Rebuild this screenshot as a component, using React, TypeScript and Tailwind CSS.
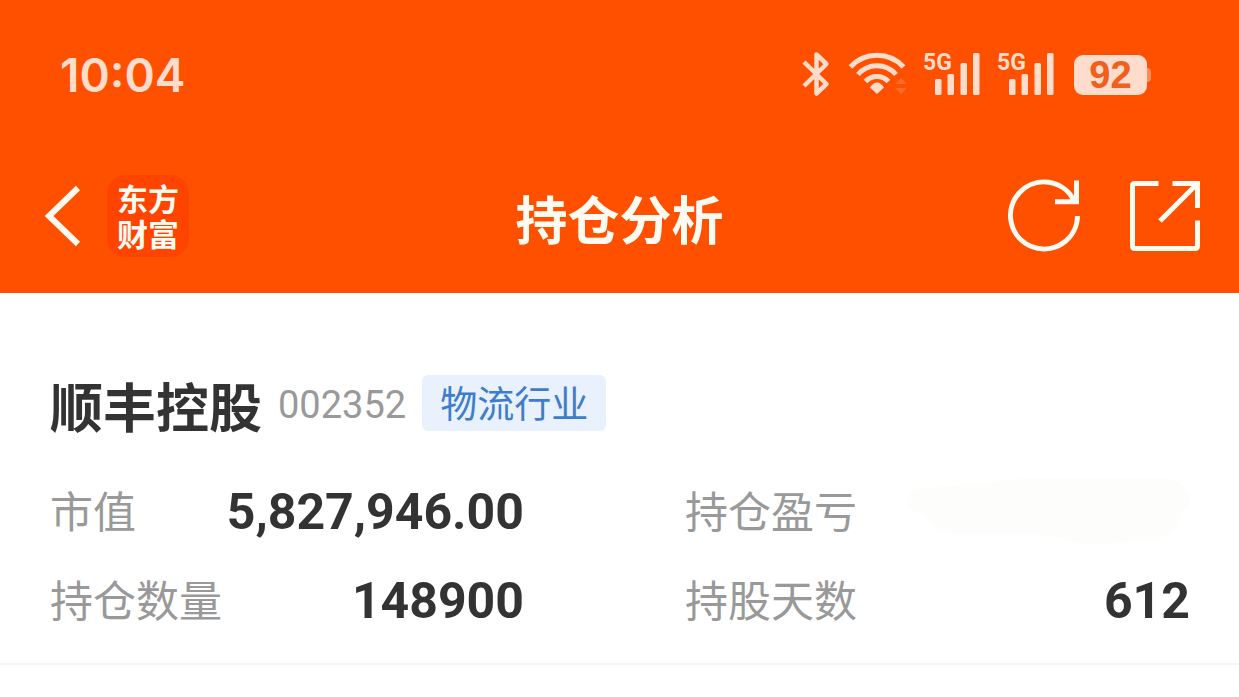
import React from 'react';

const holding = {
  name: '顺丰控股',
  code: '002352',
  industry: '物流行业',
  marketValue: '5,827,946.00',
  quantity: '148900',
  days: '612',
};

function BluetoothIcon() {
  return (
    <svg className="h-[50px] w-[28px]" viewBox="0 0 28 50" fill="none" stroke="currentColor" strokeWidth="4.5" strokeLinejoin="round">
      <path d="M2 12 L24.5 34 L14.5 43.5 V4.5 L24.5 14 L2 36" />
    </svg>
  );
}

function WifiIcon() {
  return (
    <svg className="h-[50px] w-[58px]" viewBox="0 0 58 50" fill="none" stroke="currentColor" strokeWidth="5">
      <path d="M2.5 17 A36 36 0 0 1 55.5 17" />
      <path d="M10 24.5 A25 25 0 0 1 48 24.5" />
      <path d="M17.5 31.5 A15.5 15.5 0 0 1 40.5 31.5" />
      <path d="M22 37.5 Q29 27.5 36 37.5 L29 44 Z" fill="currentColor" stroke="none" />
      <path d="M47 34 L53 28 L59 34 Z M47 38 H59 L53 44 Z" fill="#ff6a28" stroke="none" />
    </svg>
  );
}

function SignalIcon() {
  return (
    <svg className="h-[50px] w-[56px]" viewBox="0 0 56 50" fill="currentColor">
      <text x="-1" y="20" fontSize="23" fontWeight="700" fontFamily="Roboto, sans-serif">5G</text>
      <rect x="11" y="29" width="6.5" height="16" rx="1.5" />
      <rect x="23.5" y="24" width="6.5" height="21" rx="1.5" />
      <rect x="36.5" y="13" width="6.5" height="32" rx="1.5" />
      <rect x="49" y="3" width="6.5" height="42" rx="1.5" />
    </svg>
  );
}

function Battery({ level }: { level: number }) {
  return (
    <div className="flex items-center pl-0.5">
      <span className="flex h-10 w-[73px] items-center justify-center rounded-[9px] bg-[#ffdccb] font-['Liberation_Sans',sans-serif] text-[38px] leading-10 font-bold text-[#ee601b]">
        {level}
      </span>
      <span className="h-3.5 w-1 rounded-r-sm bg-[#ff8a55]" />
    </div>
  );
}

function StatusBar() {
  return (
    <div className="flex h-[150px] items-center justify-between pr-[88px] pl-[60px] text-[#ffdccb]">
      <span className="font-[Inter,sans-serif] text-[46px] leading-none font-semibold">10:04</span>
      <div className="flex items-center gap-[18px]">
        <BluetoothIcon />
        <WifiIcon />
        <SignalIcon />
        <SignalIcon />
        <Battery level={92} />
      </div>
    </div>
  );
}

function NavBar() {
  return (
    <nav className="grid h-[132px] grid-cols-[1fr_auto_1fr] items-center px-[37px] text-[#fffaf2]">
      <div className="flex items-center gap-6">
        <button type="button" aria-label="返回">
          <svg className="h-[64px] w-[46px]" viewBox="0 0 46 64" fill="none" stroke="currentColor" strokeWidth="6">
            <path d="M41 4 L12 32 L41 60" />
          </svg>
        </button>
        <div className="flex size-[82px] items-center justify-center rounded-[18px] bg-[#ff4400] pb-0.5">
          <span className="w-[62px] text-[31px] leading-[35px] font-bold break-all">东方财富</span>
        </div>
      </div>
      <h1 className="pt-1 text-[52px] leading-none font-bold">持仓分析</h1>
      <div className="flex items-center justify-end gap-[46px]">
        <button type="button" aria-label="刷新">
          <svg className="h-[76px] w-[76px]" viewBox="0 0 76 76" fill="none" stroke="currentColor" strokeWidth="5">
            <path d="M71.5 38 A33.5 33.5 0 1 1 68 22.5" />
            <path d="M70.5 2.5 V23.7 H49" />
          </svg>
        </button>
        <button type="button" aria-label="分享">
          <svg className="h-[76px] w-[74px]" viewBox="0 0 74 76" fill="none" stroke="currentColor" strokeWidth="5">
            <path d="M30.5 5.5 H7 Q4.5 5.5 4.5 8 V68 Q4.5 70.5 7 70.5 H67 Q69.5 70.5 69.5 68 V42.5" />
            <path d="M44.5 5.5 H69.5 V30 M32 43 L69 6" />
          </svg>
        </button>
      </div>
    </nav>
  );
}

function Row({ label, children }: { label: string; children: React.ReactNode }) {
  return (
    <div className="flex h-[60px] items-start justify-between">
      <dt className="text-[43px] leading-[54px] text-[#999]">{label}</dt>
      <dd className="flex h-[60px] items-center font-[Roboto,sans-serif] text-[50px] leading-[60px] font-bold">{children}</dd>
    </div>
  );
}

// Brushed-over amount
function HiddenAmount() {
  return (
    <svg className="h-[68px] w-[284px]" viewBox="0 0 284 68" fill="#fdfdfc" role="img" aria-label="已隐藏">
      <path d="M2 20 Q4 10 22 10 L90 4 Q110 0 140 0 H255 Q280 3 284 18 Q284 30 274 34 Q272 58 250 61 L215 64 Q185 70 160 61 L130 56 H50 Q24 54 20 38 Q0 34 2 20 Z" />
    </svg>
  );
}

export default function App() {
  return (
    <div className="min-h-screen bg-white font-['Noto_Sans_CJK_SC',sans-serif] text-[#333]">
      <header className="bg-[#ff5000] pb-[11px]">
        <StatusBar />
        <NavBar />
      </header>

      <main>
        <section className="border-b-2 border-[#f5f5f5] pt-[82px] pr-[49px] pb-8 pl-[50px]">
          <div className="flex h-14 items-start">
            <h2 className="text-[53px] leading-[60px] font-bold">{holding.name}</h2>
            <span className="ml-4 font-[Roboto,sans-serif] text-[38px] leading-[60px] text-[#999]">{holding.code}</span>
            <span className="ml-4 rounded-md bg-[#e8f1fc] px-[18px] pb-0.5 text-[37px] leading-[54px] text-[#3d7dcc]">{holding.industry}</span>
          </div>

          <dl className="mt-[51px] grid grid-cols-[474fr_505fr] gap-x-[161px] gap-y-[29px]">
            <Row label="市值">{holding.marketValue}</Row>
            <Row label="持仓盈亏"><HiddenAmount /></Row>
            <Row label="持仓数量">{holding.quantity}</Row>
            <Row label="持股天数">{holding.days}</Row>
          </dl>
        </section>
      </main>
    </div>
  );
}
